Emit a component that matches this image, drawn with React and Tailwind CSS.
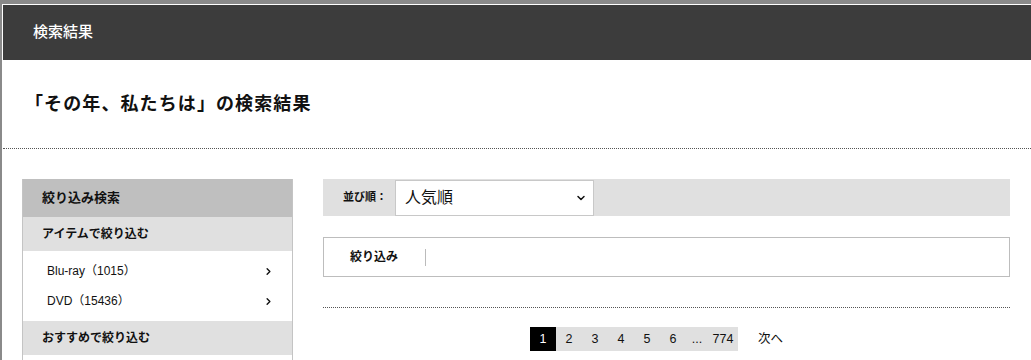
import { ChevronRight, ChevronDown } from 'lucide-react'

const font = { fontFamily: '"Liberation Sans", "Noto Sans CJK JP", sans-serif' }

const pages = ['2', '3', '4', '5', '6']

export default function App() {
  return (
    <div className="min-h-[360px] bg-white text-[#111] overflow-hidden" style={font}>
      <div className="border-t-4 border-l-2 border-[#8a8a8a]">
        <div className="border-t border-l border-white min-h-[360px]">
          {/* top header */}
          <div className="h-[55px] bg-[#3c3c3c] flex items-center pl-[30px]">
            <span className="text-white text-[15px] font-medium">検索結果</span>
          </div>

          {/* page title */}
          <div className="h-[89px] flex items-center pl-[22px] pt-[1px] border-b border-dotted border-[#555]">
            <h1 className="text-[18px] font-bold tracking-[1.1px]">「その年、私たちは」の検索結果</h1>
          </div>

          <div className="flex gap-[30px] pl-[19px] pr-[21px] pt-[30px]">
            {/* sidebar */}
            <aside className="w-[271px] shrink-0 border-x border-[#c4c4c4]">
              <div className="h-[38px] bg-[#bfbfbf] flex items-center pl-[19px] text-[13px] font-bold">絞り込み検索</div>
              <div className="h-[34px] bg-[#e0e0e0] flex items-center pl-[19px] text-[12px] font-bold">アイテムで絞り込む</div>
              <ul className="py-[5px] text-[12px]">
                <li className="h-[30px] flex items-center justify-between pl-[24px] pr-[18px]">
                  <span>Blu-ray（1015）</span>
                  <ChevronRight className="w-[11px] h-[11px]" strokeWidth={3} />
                </li>
                <li className="h-[30px] flex items-center justify-between pl-[24px] pr-[18px]">
                  <span>DVD（15436）</span>
                  <ChevronRight className="w-[11px] h-[11px]" strokeWidth={3} />
                </li>
              </ul>
              <div className="h-[34px] bg-[#e0e0e0] flex items-center pl-[19px] text-[12px] font-bold">おすすめで絞り込む</div>
              <div className="h-[20px]"></div>
            </aside>

            {/* main */}
            <main className="flex-1">
              <div className="h-[37px] bg-[#e0e0e0] flex items-center pl-[20px]">
                <span className="text-[11px] font-bold w-[52px]">並び順：</span>
                <div className="h-[36px] w-[199px] bg-white border border-[#c8c8c8] flex items-center justify-between pl-[9px] pr-[6px]">
                  <span className="text-[16px]">人気順</span>
                  <ChevronDown className="w-[12px] h-[12px]" strokeWidth={3} />
                </div>
              </div>

              <div className="mt-[21px] h-[40px] border border-[#bdbdbd] flex items-center">
                <span className="text-[12px] font-bold pl-[26px] pr-[27px]">絞り込み</span>
                <span className="h-[17px] border-l border-[#bbb]"></span>
              </div>

              <div className="mt-[30px] border-b border-dotted border-[#555]"></div>

              <div className="mt-[19px] flex items-center justify-center pr-[20px] text-[12.5px]">
                <div className="flex h-[24px]">
                  <span className="w-[26px] bg-black text-white flex items-center justify-center">1</span>
                  {pages.map(p => (
                    <span key={p} className="w-[26px] bg-[#e0e0e0] flex items-center justify-center">{p}</span>
                  ))}
                  <span className="w-[22px] bg-[#e0e0e0] flex items-center justify-center">...</span>
                  <span className="w-[30px] bg-[#e0e0e0] flex items-center justify-center">774</span>
                </div>
                <span className="ml-[20px]">次へ</span>
              </div>
            </main>
          </div>
        </div>
      </div>
    </div>
  )
}
